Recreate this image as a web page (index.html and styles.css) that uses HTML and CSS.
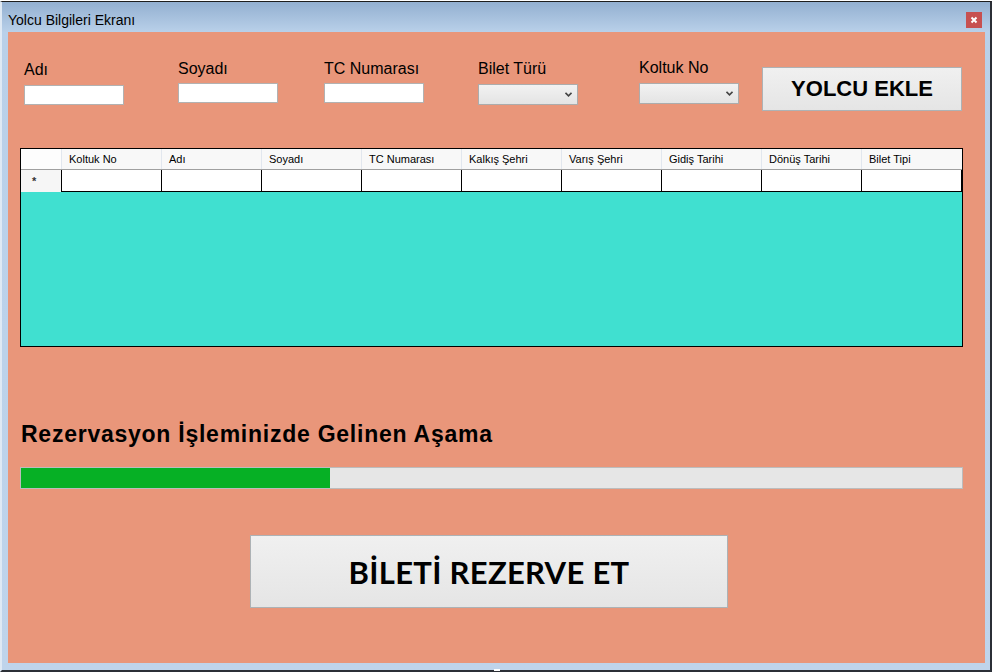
FILE: index.html
```html
<!DOCTYPE html>
<html lang="tr">
<head>
<meta charset="utf-8">
<title>Yolcu Bilgileri Ekranı</title>
<link rel="stylesheet" href="styles.css">
</head>
<body>
<div class="window">
  <div class="titlebar">
    <span class="title">Yolcu Bilgileri Ekranı</span>
    <span class="close"><svg width="16" height="16" viewBox="0 0 16 16"><path d="M5.5 5.5 L10.5 10.5 M10.5 5.5 L5.5 10.5" stroke="#fff" stroke-width="2" fill="none"/></svg></span>
  </div>
  <div class="client">
    <div class="top-row">
      <div class="field f-adi"><label class="lbl">Adı</label><div class="textbox"></div></div>
      <div class="field f-soyadi"><label class="lbl">Soyadı</label><div class="textbox"></div></div>
      <div class="field f-tc"><label class="lbl">TC Numarası</label><div class="textbox"></div></div>
      <div class="field f-bilet"><label class="lbl">Bilet Türü</label><div class="combo"><svg class="chev" width="7" height="5" viewBox="0 0 7 5"><path d="M0.5 0.8 L3.5 3.8 L6.5 0.8" stroke="#444" stroke-width="1.6" fill="none"/></svg></div></div>
      <div class="field f-koltuk"><label class="lbl">Koltuk No</label><div class="combo"><svg class="chev" width="7" height="5" viewBox="0 0 7 5"><path d="M0.5 0.8 L3.5 3.8 L6.5 0.8" stroke="#444" stroke-width="1.6" fill="none"/></svg></div></div>
      <button class="btn btn-add">YOLCU EKLE</button>
    </div>

    <div class="grid">
      <div class="grid-head">
        <div class="hcell corner"></div>
        <div class="hcell">Koltuk No</div>
        <div class="hcell">Adı</div>
        <div class="hcell">Soyadı</div>
        <div class="hcell">TC Numarası</div>
        <div class="hcell">Kalkış Şehri</div>
        <div class="hcell">Varış Şehri</div>
        <div class="hcell">Gidiş Tarihi</div>
        <div class="hcell">Dönüş Tarihi</div>
        <div class="hcell last">Bilet Tipi</div>
      </div>
      <div class="grid-row">
        <div class="rowhead">*</div>
        <div class="cell"></div>
        <div class="cell"></div>
        <div class="cell"></div>
        <div class="cell"></div>
        <div class="cell"></div>
        <div class="cell"></div>
        <div class="cell"></div>
        <div class="cell"></div>
        <div class="cell last"></div>
      </div>
    </div>

    <h2 class="stage">Rezervasyon İşleminizde Gelinen Aşama</h2>
    <div class="progress"><div class="fill" style="width:309px"></div></div>

    <button class="btn btn-reserve">BİLETİ REZERVE ET</button>
  </div>
</div>
</body>
</html>
```

FILE: styles.css
```css
html, body {
  margin: 0;
  padding: 0;
  background: #ffffff;
}
body {
  padding-top: 1px;
  font-family: "Liberation Sans", Arial, sans-serif;
  color: #000;
}

.window {
  position: relative;
  width: 992px;
  height: 671px;
  box-sizing: border-box;
  border-top: 1px solid #1e1e1e;
  border-left: 2px solid #dfe9f4;
  border-right: 2px solid #2b2f36;
  border-bottom: 2px solid #2b2f36;
  background: linear-gradient(#93b0d1 0, #b9d0e9 30px, #bfd4eb 100%);
  display: flex;
  flex-direction: column;
}
.window::after {
  content: "";
  position: absolute;
  left: 492px;
  bottom: -1px;
  width: 6px;
  height: 2px;
  background: #ffffff;
}

.titlebar {
  height: 30px;
  box-sizing: border-box;
  padding: 10px 8px 0 6px;
  display: flex;
  justify-content: space-between;
  align-items: flex-start;
}
.title {
  font-size: 14px;
  line-height: 16px;
  color: #000;
}
.close {
  width: 16px;
  height: 16px;
  background: #c75050;
  display: block;
}
.close svg { display: block; }

.client {
  margin: 0 5px 7px 6px;
  height: 631px;
  background: #e9967a;
  display: flex;
  flex-direction: column;
  align-items: flex-start;
}

.top-row {
  height: 116px;
  box-sizing: border-box;
  padding: 28px 0 0 16px;
  display: flex;
  align-items: flex-start;
}
.field { width: 100px; }
.lbl {
  display: block;
  font-size: 16px;
  line-height: 18px;
  height: 18px;
  white-space: nowrap;
}
.textbox {
  width: 100px;
  height: 20px;
  box-sizing: border-box;
  margin-top: 5px;
  background: #fff;
  border: 1px solid #b2b2b2;
}
.combo {
  position: relative;
  width: 100px;
  height: 21px;
  box-sizing: border-box;
  margin-top: 6px;
  border: 1px solid #acacac;
  background: linear-gradient(#f2f2f2, #e4e4e4);
}
.chev {
  position: absolute;
  right: 5px;
  top: 7px;
  display: block;
}

.f-adi { margin-top: 1px; }
.f-adi .textbox { margin-top: 6px; }
.f-soyadi { margin-left: 54px; }
.f-tc { margin-left: 46px; }
.f-bilet { margin-left: 54px; }
.f-koltuk { margin-left: 61px; margin-top: -1px; }

.btn {
  box-sizing: border-box;
  border: 1px solid #adb2b5;
  background: linear-gradient(#f0f0f0, #e5e5e5);
  color: #000;
  padding: 0;
  margin: 0;
  cursor: default;
}
.btn-add {
  margin-left: 23px;
  margin-top: 7px;
  width: 200px;
  height: 44px;
  font-family: "Liberation Sans", Arial, sans-serif;
  font-weight: 700;
  font-size: 22px;
}

.grid {
  margin-left: 12px;
  width: 943px;
  height: 199px;
  box-sizing: border-box;
  border: 1px solid #000;
  background: #40e0d0;
}
.grid-head, .grid-row {
  display: grid;
  grid-template-columns: 40px repeat(8, 100px) 101px;
}
.grid-head {
  height: 21px;
  box-sizing: border-box;
  border-bottom: 1px solid #a0a0a0;
  background: #f8f8f8;
}
.hcell {
  border-left: 1px solid #e2e7ee;
  padding-left: 7px;
  font-size: 11px;
  line-height: 20px;
  white-space: nowrap;
  overflow: hidden;
}
.hcell.corner {
  border-left: none;
  padding: 0;
  background: #fdfdfd;
}
.grid-row {
  height: 22px;
}
.rowhead {
  background: #f6f6f6;
  font-size: 11px;
  line-height: 22px;
  color: #333;
  padding-left: 11px;
  font-weight: 700;
}
.cell {
  background: #fff;
  border-left: 1px solid #000;
  border-bottom: 1px solid #000;
}
.cell.last {
  border-right: 1px solid #000;
}

.stage {
  margin: 75px 0 0 13px;
  font-size: 23px;
  line-height: 25px;
  font-weight: 700;
  letter-spacing: 0.75px;
  white-space: nowrap;
}

.progress {
  margin: 20px 0 0 12px;
  width: 943px;
  height: 22px;
  box-sizing: border-box;
  border: 1px solid #bcbcbc;
  background: #e6e6e6;
}
.fill {
  height: 100%;
  background: #06b025;
}

.btn-reserve {
  margin: 46px 0 0 242px;
  width: 478px;
  height: 73px;
  font-family: Lato, "Open Sans", sans-serif;
  font-weight: 700;
  font-size: 31px;
  letter-spacing: 0.3px;
}
```
